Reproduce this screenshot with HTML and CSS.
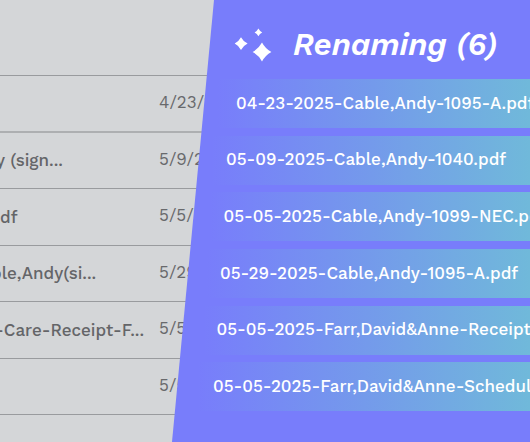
FILE: index.html
```
<!DOCTYPE html>
<html lang="en">
<head>
<meta charset="utf-8">
<title>Renaming</title>
<link rel="stylesheet" href="styles.css">
</head>
<body>
<main class="stage">
  <section class="files">
    <div class="file head"></div>
    <div class="file first"><span class="name"></span><span class="date">4/23/25</span></div>
    <div class="file"><span class="name n2">y (sign...</span><span class="date">5/9/25</span></div>
    <div class="file"><span class="name n3">df</span><span class="date">5/5/25</span></div>
    <div class="file"><span class="name n4">ble,Andy(si...</span><span class="date">5/29/25</span></div>
    <div class="file"><span class="name n5">-Care-Receipt-F...</span><span class="date">5/5/25</span></div>
    <div class="file"><span class="name"></span><span class="date">5/5/25</span></div>
  </section>
  <section class="panel">
    <header class="title">
      <svg class="sparkles" viewBox="0 0 39 34" width="39" height="34">
        <path d="M8 8.200Q10.200 12.400 14.600 14.600Q10.200 16.800 8 21Q5.800 16.800 1.700 14.600Q5.800 12.400 8 8.200Z"/>
        <path d="M25.400 -.400Q26.700 2.200 29.200 3.400Q26.700 4.600 25.400 7.200Q24.100 4.600 21.600 3.400Q24.100 2.200 25.400 -.400Z"/>
        <path d="M29 13.500Q32.300 19.700 38.400 23Q32.300 26.300 29 32.500Q25.700 26.300 19.600 23Q25.700 19.700 29 13.500Z"/>
      </svg>
      <h1>Renaming (6)</h1>
    </header>
    <div class="bar b1"><span>04-23-2025-Cable,Andy-1095-A.pdf</span></div>
    <div class="bar b2"><span>05-09-2025-Cable,Andy-1040.pdf</span></div>
    <div class="bar b3"><span>05-05-2025-Cable,Andy-1099-NEC.pdf</span></div>
    <div class="bar b4"><span>05-29-2025-Cable,Andy-1095-A.pdf</span></div>
    <div class="bar b5"><span>05-05-2025-Farr,David&amp;Anne-Receipt.pdf</span></div>
    <div class="bar b6"><span>05-05-2025-Farr,David&amp;Anne-Schedule.pdf</span></div>
  </section>
</main>
</body>
</html>
```
FILE: styles.css
```
* { box-sizing: border-box; }
body {
  margin: 0;
  overflow: hidden;
  font-family: "Work Sans", Inter, "Liberation Sans", sans-serif;
}
.stage {
  display: grid;
  width: 530px;
  height: 442px;
  overflow: hidden;
  background: #d4d6d8;
}
.files, .panel {
  grid-area: 1 / 1;
  min-width: 0;
}
.file {
  display: grid;
  grid-template-columns: 159px 1fr;
  align-items: center;
  height: 56.500px;
  padding-bottom: 3px;
  border-bottom: 1px solid #999b9e;
  color: #68696c;
  font-size: 17px;
  white-space: nowrap;
}
.file.head { height: 76px; }
.file.first { padding-bottom: 2px; border-bottom: 2px solid #adafb1; }
.name { padding-top: 3px; font-weight: 500; color: #646568; }
.n2 { margin-left: -4px; }
.n3 { margin-left: 0; }
.n4 { margin-left: -9px; }
.n5 { margin-left: -5px; }
.panel {
  background: #787dfb;
  clip-path: polygon(214px 0, 100% 0, 100% 100%, 172px 100%);
  color: #fff;
}
.title {
  display: flex;
  height: 79.300px;
  padding-left: 233px;
}
.sparkles {
  margin-top: 29px;
  fill: #fff;
  overflow: visible;
}
h1 {
  margin: 26px 0 0 21px;
  font-size: 31.500px;
  line-height: 38px;
  font-weight: 600;
  font-style: italic;
  white-space: nowrap;
}
.bar {
  display: flex;
  align-items: center;
  height: 49px;
  margin-bottom: 7.600px;
  padding-bottom: 2px;
  overflow: hidden;
  background: linear-gradient(90deg, #787dfb, #749aeb 50%, #70b9da);
  font-size: 17px;
  font-weight: 500;
  white-space: nowrap;
}
.b1 { margin-left: 217px; padding-left: 19px; }
.b2 { margin-left: 212px; padding-left: 14px; }
.b3 { margin-left: 210px; padding-left: 13.500px; }
.b4 { margin-left: 207px; padding-left: 13px; }
.b5 { margin-left: 204px; padding-left: 12.500px; }
.b6 { margin-left: 198px; padding-left: 15px; }
```
